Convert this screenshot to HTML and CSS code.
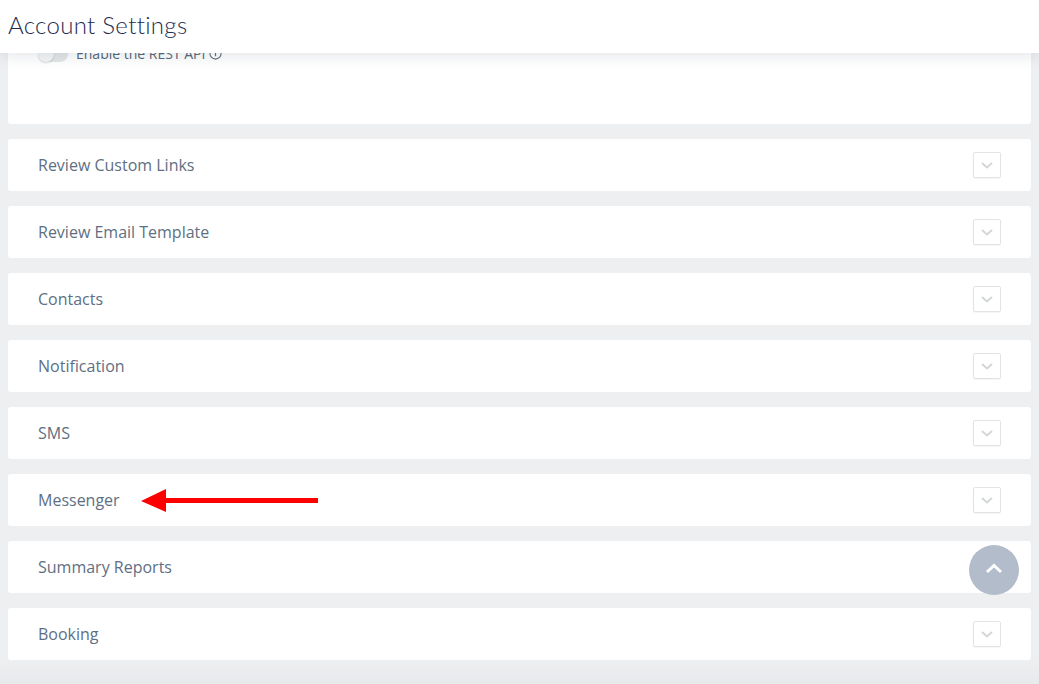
FILE: index.html
```html
<!DOCTYPE html>
<html lang="en">
<head>
  <meta charset="UTF-8">
  <title>Account Settings</title>
  <link rel="stylesheet" href="styles.css">
</head>
<body>

<header class="page-header">
  <h1>Account Settings</h1>
</header>

<main class="settings">
  <section class="panel panel-open">
    <label class="toggle-row">
      <span class="toggle"><span class="knob"></span></span>
      <span class="toggle-label">Enable the REST API</span>
      <svg class="info" width="13" height="13" viewBox="0 0 14 14"><circle cx="7" cy="7" r="6" fill="none" stroke="#5f6f80" stroke-width="1.2"/><path d="M7 6v4M7 4v.8" stroke="#5f6f80" stroke-width="1.3"/></svg>
    </label>
  </section>

  <section class="panel"><span class="panel-title">Review Custom Links</span><button class="expand"><svg width="12" height="7" viewBox="0 0 12 7"><path d="M1 1l5 4.5L11 1" fill="none" stroke="#d3d6d8" stroke-width="2"/></svg></button></section>
  <section class="panel"><span class="panel-title">Review Email Template</span><button class="expand"><svg width="12" height="7" viewBox="0 0 12 7"><path d="M1 1l5 4.5L11 1" fill="none" stroke="#d3d6d8" stroke-width="2"/></svg></button></section>
  <section class="panel"><span class="panel-title">Contacts</span><button class="expand"><svg width="12" height="7" viewBox="0 0 12 7"><path d="M1 1l5 4.5L11 1" fill="none" stroke="#d3d6d8" stroke-width="2"/></svg></button></section>
  <section class="panel"><span class="panel-title">Notification</span><button class="expand"><svg width="12" height="7" viewBox="0 0 12 7"><path d="M1 1l5 4.5L11 1" fill="none" stroke="#d3d6d8" stroke-width="2"/></svg></button></section>
  <section class="panel"><span class="panel-title">SMS</span><button class="expand"><svg width="12" height="7" viewBox="0 0 12 7"><path d="M1 1l5 4.5L11 1" fill="none" stroke="#d3d6d8" stroke-width="2"/></svg></button></section>
  <section class="panel">
    <span class="panel-title">Messenger</span>
    <svg class="pointer" width="178" height="26" viewBox="0 0 178 26"><path d="M0 13L25 1v9h152v5H25v9z" fill="#f00"/></svg>
    <button class="expand"><svg width="12" height="7" viewBox="0 0 12 7"><path d="M1 1l5 4.5L11 1" fill="none" stroke="#d3d6d8" stroke-width="2"/></svg></button>
  </section>
  <section class="panel"><span class="panel-title">Summary Reports</span><button class="expand"><svg width="12" height="7" viewBox="0 0 12 7"><path d="M1 1l5 4.5L11 1" fill="none" stroke="#d3d6d8" stroke-width="2"/></svg></button></section>
  <section class="panel"><span class="panel-title">Booking</span><button class="expand"><svg width="12" height="7" viewBox="0 0 12 7"><path d="M1 1l5 4.5L11 1" fill="none" stroke="#d3d6d8" stroke-width="2"/></svg></button></section>
</main>

<div class="page-bottom"></div>

<button class="to-top"><svg width="18" height="11" viewBox="0 0 18 11"><path d="M2 9l7-6.5L16 9" fill="none" stroke="#fff" stroke-width="3"/></svg></button>

</body>
</html>
```

FILE: styles.css
```css
body {
  margin: 0;
  background: #eeeff1;
  font-family: "Open Sans", sans-serif;
  overflow: hidden;
}

.page-header {
  position: relative;
  z-index: 2;
  height: 53px;
  background: #fff;
  box-shadow: 0 3px 14px rgba(40, 60, 80, 0.13);
  padding: 0 8px;
}

.page-header h1 {
  margin: 0;
  font-family: "Lato", sans-serif;
  font-weight: 300;
  font-size: 24px;
  line-height: 49px;
  color: #1d2b50;
  letter-spacing: 0.3px;
}

.settings {
  display: flex;
  flex-direction: column;
  gap: 15px;
  padding: 0 8px;
}

.panel {
  display: flex;
  align-items: center;
  height: 52px;
  padding: 0 30px;
  background: #fff;
  border-radius: 3px;
}

.panel-open {
  margin-top: -14px;
  height: 85px;
  align-items: flex-start;
}

.toggle-row {
  display: flex;
  align-items: center;
  gap: 8px;
  margin-top: 5px;
  color: #56687b;
  font-size: 14px;
}

.toggle {
  width: 30px;
  height: 16px;
  border-radius: 8px;
  background: #e4e6e8;
  position: relative;
}

.knob {
  position: absolute;
  left: 0;
  top: 0;
  width: 16px;
  height: 16px;
  border-radius: 50%;
  background: #f4f5f6;
  box-shadow: 0 1px 2px rgba(0, 0, 0, 0.15);
}

.info {
  margin-left: -4px;
}

.panel-title {
  font-size: 16px;
  color: #5e6f83;
}

.pointer {
  margin-left: 21px;
  margin-top: 2px;
}

.expand {
  margin-left: auto;
  width: 28px;
  height: 26px;
  padding: 0;
  display: flex;
  align-items: center;
  justify-content: center;
  background: #fff;
  border: 1px solid #e2e3e4;
  border-radius: 2px;
  box-shadow: 0 1px 1px rgba(0, 0, 0, 0.04);
}

.page-bottom {
  height: 40px;
  background: linear-gradient(#eeeff1, #e4e5e8);
}

.to-top {
  position: fixed;
  left: 969px;
  top: 545px;
  width: 50px;
  height: 50px;
  border: none;
  border-radius: 50%;
  background: #b3bccb;
  display: flex;
  align-items: center;
  justify-content: center;
  padding: 0 0 3px;
}
```
